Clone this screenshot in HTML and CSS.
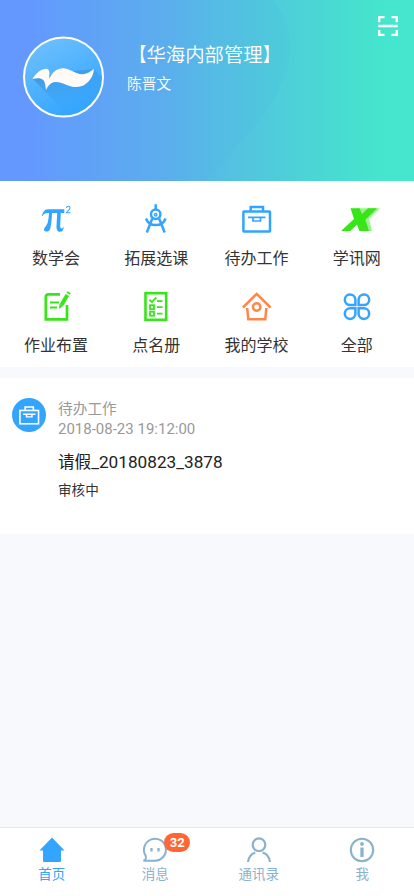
FILE: index.html
```html
<!DOCTYPE html>
<html lang="zh-CN">
<head>
<meta charset="utf-8">
<meta name="viewport" content="width=device-width, initial-scale=1">
<title>首页</title>
<link rel="stylesheet" href="styles.css">
</head>
<body>
<div class="app">
  <header class="hero">
    <svg class="hero-curve" viewBox="0 0 414 181" aria-hidden="true"><path d="M0 0H273C284 12 290 30 290 48C290 72 274 104 254 127L205 181H0Z" fill="#4a8cff" fill-opacity=".03"/></svg>
    <svg class="avatar" viewBox="0 0 82 82" aria-hidden="true">
      <defs>
        <linearGradient id="disc" x1=".2" y1="0" x2=".7" y2="1"><stop offset="0" stop-color="#6fc0fd"/><stop offset="1" stop-color="#2fa4ff"/></linearGradient>
        <linearGradient id="shade" x1=".3" y1=".1" x2=".75" y2="1"><stop offset="0" stop-color="#2878c0" stop-opacity=".42"/><stop offset="1" stop-color="#2fa4ff" stop-opacity="0"/></linearGradient>
      </defs>
      <circle cx="40.500" cy="41" r="39.500" fill="url(#disc)" stroke="#fff" stroke-width="2"/>
      <path d="M10 43L42 76C62 76 79 62 79 42L71 33L40 36Z" fill="url(#shade)"/>
      <path d="M9.500 43C14 36 19 32.500 23.500 32.800C26.500 33 27 37 26 43C29.500 36 34.500 32 40.500 32.300C48.500 33 52.500 38.500 59.500 38.200C64.500 38 68.500 35 71 32.800C70.500 42 63.500 51 53.500 51C44.500 51 38.500 45 31.500 46C27 47 25 50 23 54C22.300 50 22.500 45.500 19.500 43.500C17 41.500 13 42 9.500 43Z" fill="#fffaf6"/>
    </svg>
    <div class="profile">
      <h1 class="org"><span class="open">【</span>华海内部管理<span class="close">】</span></h1>
      <p class="user">陈晋文</p>
    </div>
    <svg class="scan" viewBox="0 0 20 20" aria-hidden="true"><path d="M1.200 6.200V1.200H6.500M13.500 1.200H18.800V6.200M18.800 14V18.800H13.500M6.500 18.800H1.200V14M.3 10H19.700" fill="none" stroke="#fff" stroke-width="2.300"/></svg>
  </header>

  <main>
    <nav class="shortcuts">
      <a class="shortcut blue"><svg viewBox="0 0 30 30"><path d="M1 12C1.800 8 3.500 5.200 7 5.200H23.300V9H19.800L19.200 22C19.200 25 21 25.500 22.800 22.500C22.800 25.500 21.500 27.800 19 27.800C16.500 27.800 15.300 25.500 15.500 22L16.200 9H11C10.800 15 10.300 21 9.100 25C8 28.300 3.300 28.500 3 25.500C3 23.500 5.600 22 6.600 19C7.500 16 7.800 12 8 9H6.500C4 9 2.500 9.800 1.800 12Z" fill="currentColor"/><path d="M25.500 4C25.800 1.700 29 1.700 29 4C29 5.500 26.500 7 25.500 8.700H29.500" fill="none" stroke="currentColor" stroke-width="1.100"/></svg><span>数学会</span></a>
      <a class="shortcut blue"><svg viewBox="0 0 30 30" fill="none" stroke="currentColor" stroke-width="2.500"><path d="M14.700 .3V6M11.300 14.500L5.800 28.500M18.100 14.500L23.700 28.500M5 14.500C8 23.300 21.500 23.300 24.500 14.500"/><circle cx="14.700" cy="10.300" r="4.700"/><circle cx="14.700" cy="10.800" r=".7"/></svg><span>拓展选课</span></a>
      <a class="shortcut blue"><svg viewBox="0 0 30 30" fill="none" stroke="currentColor" stroke-width="2.500"><rect x="1.400" y="7.500" width="26.600" height="19.900" rx=".5"/><path d="M8.700 7.500V3H21V7.500"/><path d="M6 13.300H23.500M11 14V17H18.500V14" stroke-width="1.700"/></svg><span>待办工作</span></a>
      <a class="shortcut green"><svg viewBox="0 0 30 30"><path d="M14 4.200H38L27 15L30 27H23L18 17Z" fill="#9cf28c"/><path d="M8.500 4.200H17.500L20 10L26 4.200H35L23.300 15.700L27 27H17.500L15 20.500L8.300 27H-1L12 15Z" fill="currentColor"/></svg><span class="low">学讯网</span></a>
      <a class="shortcut green"><svg viewBox="0 0 30 30" fill="none" stroke="currentColor" stroke-width="2.700"><path d="M19 3.300H7.500Q4.800 3.300 4.800 6V28.300H26V14"/><path d="M9 11.500H18M9 16.500H16" stroke-width="1.800"/><path d="M20.500 14L26.300 4" stroke-width="4"/><path d="M27.200 2.700L28 1.300" stroke-width="4"/><path d="M18.500 12.800L22.200 15L18 18Z" fill="currentColor" stroke="none"/></svg><span>作业布置</span></a>
      <a class="shortcut green"><svg viewBox="0 0 30 30" fill="none" stroke="currentColor" stroke-width="2.600"><rect x="4.500" y="2.200" width="20.700" height="26.600"/><g stroke-width="1.800"><path d="M8.300 8.700L11 11L15.300 6.300M16 10.200H21.500M16 16.200H21.500M16 22.700H21.500"/><rect x="9" y="14.200" width="4" height="4"/><rect x="9" y="20.700" width="4" height="4"/></g></svg><span>点名册</span></a>
      <a class="shortcut orange"><svg viewBox="0 0 30 30" fill="none" stroke="currentColor" stroke-width="2.500"><path d="M1 16.500L14.700 2.900L28.500 16.500M5.200 17L6.300 28.300H23.300L24.300 17"/><circle cx="14.700" cy="16" r="3.700"/></svg><span>我的学校</span></a>
      <a class="shortcut blue"><svg viewBox="0 0 30 30" fill="none" stroke="currentColor" stroke-width="2.500"><path d="M13.400 14.100V8.500A5.300 5.300 0 1 0 8.100 14.100ZM16.600 14.100V8.500A5.300 5.300 0 1 1 21.900 14.100ZM13.400 17.300V22.900A5.300 5.300 0 1 1 8.100 17.300ZM16.600 17.300V22.900A5.300 5.300 0 1 0 21.900 17.300Z"/></svg><span>全部</span></a>
    </nav>

    <article class="task">
      <div class="task-icon"><svg viewBox="0 0 30 30" fill="none" stroke="#fff" stroke-width="2.300"><rect x="1.400" y="8" width="27.200" height="19.500"/><path d="M9 8V3H21V8"/><path d="M6 13.600H24M11 14V17.300H19V14" stroke-width="2"/></svg></div>
      <div class="task-body">
        <p class="task-type">待办工作</p>
        <time class="task-time">2018-08-23 19:12:00</time>
        <h2 class="task-title">请假<span class="task-no">_20180823_3878</span></h2>
        <p class="task-status">审核中</p>
      </div>
    </article>
  </main>

  <nav class="tabs">
    <a class="tab active"><svg viewBox="0 0 26 26"><path d="M13 .5L25.500 13.500H22V24Q22 25 21 25H5Q4 25 4 24V13.500H.5Z" fill="currentColor"/></svg><span>首页</span></a>
    <a class="tab"><span class="tab-icon"><svg viewBox="0 0 26 26" fill="none" stroke="currentColor" stroke-width="2"><path d="M1.500 23.700H13A11 11 0 1 0 3.300 18C4 20 5.300 22 1.500 23.700Z"/><path d="M9.500 11V14.500M16.500 11V14.500" stroke-width="2.300"/></svg><b class="badge">32</b></span><span>消息</span></a>
    <a class="tab"><svg viewBox="0 0 26 26" fill="none" stroke="currentColor" stroke-width="2.200"><circle cx="13" cy="7.700" r="6.300"/><path d="M2 25C2.500 20.500 5 17 9.300 15.500M16.700 15.500C21 17 23.500 20.500 24 25"/></svg><span>通讯录</span></a>
    <a class="tab"><svg viewBox="0 0 26 26" fill="none" stroke="currentColor" stroke-width="2.100"><circle cx="13" cy="13" r="11.200"/><path d="M13 10.500V20" stroke-width="3.300"/><circle cx="13" cy="7" r="1.900" fill="currentColor" stroke="none"/></svg><span>我</span></a>
  </nav>
</div>
</body>
</html>
```

FILE: styles.css
```css
* { box-sizing: border-box; }
body {
  margin: 0;
  font-family: Roboto, "Noto Sans CJK SC", sans-serif;
  color: #333;
  background: #f7f9fc;
}
h1, h2, p { margin: 0; font-weight: 400; }
svg { display: block; overflow: visible; }
.app { display: flex; flex-direction: column; height: 896px; }
main { flex: 1; }

.hero {
  position: relative;
  display: flex;
  height: 181px;
  padding: 16px 15px 0 23px;
  color: #fff;
  background: linear-gradient(90deg, #6699ff 0, #6699ff 6%, #5cb0ed 40%, #4dd0d8 70%, #45e6cd 93%, #45e6cd 100%);
}
.hero-curve { position: absolute; inset: 0; width: 414px; height: 181px; }
.avatar { position: relative; width: 82px; height: 82px; margin-top: 20px; }
.profile { position: relative; flex: 1; margin: 26px 0 0 22px; }
.org { font-size: 19.4px; line-height: 28px; font-weight: 350; white-space: nowrap; }
.open, .close { display: inline-block; transform: scaleX(.85); }
.open { transform-origin: right; }
.close { transform-origin: left; }
.user { margin-top: 3px; font-size: 14.7px; line-height: 22px; font-weight: 350; }
.scan { position: relative; width: 20px; height: 20px; margin-right: 1px; }

.shortcuts {
  display: grid;
  grid-template-columns: repeat(4, 1fr);
  height: 186px;
  padding: 23px 7px 0 6px;
  grid-auto-rows: 87px;
  background: #fff;
}
.shortcut { display: flex; flex-direction: column; align-items: center; gap: 13px; }
.shortcut svg { width: 30px; height: 30px; }
.shortcut span { color: #333; font-size: 16px; line-height: 24px; }
.blue { color: #33a5ff; }
.green { color: #37e519; }
.orange { color: #ff8548; }

.task {
  display: flex;
  gap: 12px;
  height: 156px;
  margin-top: 11px;
  padding: 20px 12px;
  background: #fff;
}
.task-icon {
  display: grid;
  place-items: center;
  width: 34px;
  height: 34px;
  border-radius: 50%;
  background: #33a5ff;
}
.task-icon svg { width: 20.5px; height: 20.5px; }
.task-body { padding-top: 1px; }
.task-type, .task-time { display: block; color: #999; font-size: 14.7px; line-height: 20px; }
.task-time { font-size: 15px; }
.task-title { margin-top: 10px; font-size: 16.6px; line-height: 26px; color: #222; }
.task-no { font-size: 17.2px; }
.task-status { margin-top: 4px; font-size: 13.6px; line-height: 20px; }

.tabs {
  display: grid;
  grid-template-columns: repeat(4, 1fr);
  height: 69px;
  padding-top: 9px;
  border-top: 1px solid #e8ebee;
  background: #fff;
}
.tab { display: flex; flex-direction: column; align-items: center; gap: 1px; color: #8ab2cc; font-size: 13.5px; line-height: 20px; }
.tab svg { width: 26px; height: 26px; }
.tab.active { color: #33a5ff; }
.tab-icon { position: relative; }
.badge {
  position: absolute;
  left: 22px;
  top: -4px;
  width: 26px;
  height: 19px;
  border-radius: 10px;
  background: #ff6633;
  color: #fff;
  font-size: 13px;
  font-weight: 700;
  line-height: 19px;
  text-align: center;
}
```
